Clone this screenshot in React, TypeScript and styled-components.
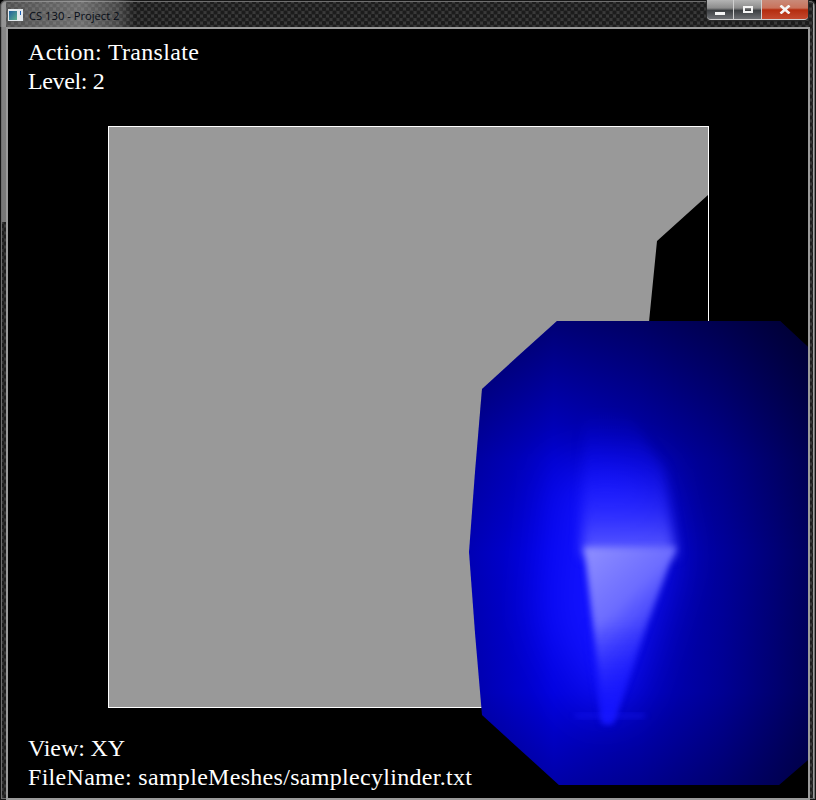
import styled, { createGlobalStyle } from "styled-components";

const GlobalStyle = createGlobalStyle`
  html, body {
    margin: 0;
    padding: 0;
    background: #000;
  }
`;

const WindowFrame = styled.div`
  width: 816px;
  height: 800px;
  box-sizing: border-box;
  display: flex;
  flex-direction: column;
  padding: 0 8px 2px 8px;
  overflow: hidden;
  border-radius: 6px 6px 0 0;
  background-color: #3a3a3a;
  background-image:
    linear-gradient(#a8a8a8, #9a9a9a),
    linear-gradient(#8a8a8a, #777),
    linear-gradient(#a0a0a0, #a0a0a0),
    radial-gradient(circle at 2px 2px, #1c1c1c 2px, transparent 2.6px),
    radial-gradient(circle at 2px 2px, #1c1c1c 2px, transparent 2.6px);
  background-size: 2px 800px, 5px 222px, 816px 2px, 7px 7px, 7px 7px;
  background-position: 813px 0, 1px 0, 0 798px, 0 0, 3.5px 3.5px;
  background-repeat: no-repeat, no-repeat, no-repeat, repeat, repeat;
  box-shadow: inset 0 0 0 1px #161616, inset 0 0 0 2px #6e6e6e;
`;

const TitleBar = styled.div`
  height: 27px;
  flex: none;
  display: flex;
  align-items: flex-start;
  justify-content: space-between;
  margin: 0 -8px 2px;
  padding: 0 8px;
  background-image: linear-gradient(90deg, rgba(170, 170, 170, 0.35), rgba(190, 190, 190, 0.5) 80px, rgba(170, 170, 170, 0.3) 118px, transparent 135px);
`;

const TitleGroup = styled.div`
  display: flex;
  align-items: center;
  gap: 6px;
  height: 30px;
`;

const AppIcon = styled.svg`
  flex: none;
`;

const TitleText = styled.span`
  font-family: "Open Sans", "Noto Sans", sans-serif;
  font-size: 11.2px;
  color: #060c16;
`;

const ButtonGroup = styled.div`
  display: flex;
  gap: 1px;
  background: #d0d0d0;
  padding-bottom: 1px;
  border-radius: 0 0 4px 4px;
  box-shadow: 0 0 0 1px #2a2a2a;
`;

const CaptionButton = styled.div<{ $width: number; $danger?: boolean }>`
  width: ${(p) => p.$width}px;
  height: 19px;
  display: flex;
  align-items: center;
  justify-content: center;
  background: ${(p) =>
    p.$danger
      ? "linear-gradient(#c98a78, #c9735c 42%, #b42c0e 52%, #c4492e)"
      : "linear-gradient(#b4b4b4, #8c8c8c 42%, #3c3f42 55%, #6e7074)"};
  &:first-child {
    border-bottom-left-radius: 3px;
  }
  &:last-child {
    border-bottom-right-radius: 3px;
  }
`;

const MinimizeGlyph = styled.div`
  width: 10px;
  height: 3px;
  margin-top: 7px;
  background: #f4f4f4;
`;

const MaximizeGlyph = styled.div`
  width: 10px;
  height: 7px;
  box-sizing: border-box;
  border: 2px solid #f4f4f4;
`;

const Viewport = styled.div`
  position: relative;
  flex: 1;
  display: flex;
  flex-direction: column;
  justify-content: space-between;
  padding: 9px 20px 6px;
  background: #000;
  box-shadow: 0 0 0 2px #9a9a9a;
`;

const Scene = styled.svg`
  position: absolute;
  left: -8px;
  top: -29px;
`;

const LabelGroup = styled.div`
  position: relative;
  font-family: "Liberation Serif", "Times New Roman", serif;
  font-size: 24px;
  line-height: 29px;
  color: #fff;
`;

const Label = styled.div<{ $tracking: number }>`
  white-space: nowrap;
  letter-spacing: ${(p) => p.$tracking}px;
`;

export default function App() {
  return (
    <>
      <GlobalStyle />
      <WindowFrame>
        <TitleBar>
          <TitleGroup>
            <AppIcon width={15} height={12} viewBox="0 0 15 12">
              <defs>
                <linearGradient id="appIconFill" x1="0" y1="0" x2="1" y2="1">
                  <stop offset="0" stopColor="#1f5f9f" />
                  <stop offset="1" stopColor="#5fb08a" />
                </linearGradient>
              </defs>
              <rect width={15} height={12} fill="#e4eaee" />
              <rect x={1} y={2} width={8} height={9} fill="url(#appIconFill)" />
              <rect x={12} y={2} width={1} height={4} fill="#1d63b8" />
            </AppIcon>
            <TitleText>CS 130 - Project 2</TitleText>
          </TitleGroup>
          <ButtonGroup>
            <CaptionButton $width={26}>
              <MinimizeGlyph />
            </CaptionButton>
            <CaptionButton $width={27}>
              <MaximizeGlyph />
            </CaptionButton>
            <CaptionButton $width={46} $danger>
              <svg width={12} height={9} viewBox="0 0 12 9">
                <path d="M1.5 0.5 L10.5 8.5 M10.5 0.5 L1.5 8.5" stroke="#f4f4f4" strokeWidth={2.6} fill="none" />
              </svg>
            </CaptionButton>
          </ButtonGroup>
        </TitleBar>
        <Viewport>
          <Scene width={816} height={800} viewBox="0 0 816 800">
            <defs>
              <clipPath id="canvasClip">
                <rect x={8} y={29} width={800} height={769} />
              </clipPath>
              <clipPath id="meshClip">
                <polygon points="557,321 780,321 808,347 808,760 779,785 559,785 482,715 475,633 469,552 475,472 482,389 517,357" />
              </clipPath>
              <linearGradient id="shadeX" x1="469" x2="808" y1="0" y2="0" gradientUnits="userSpaceOnUse">
                <stop offset="0" stopColor="#0000b4" />
                <stop offset="0.25" stopColor="#0000e8" />
                <stop offset="0.5" stopColor="#0000c8" />
                <stop offset="0.75" stopColor="#00009a" />
                <stop offset="1" stopColor="#000060" />
              </linearGradient>
              <linearGradient id="shadeY" x1="0" x2="0" y1="321" y2="785" gradientUnits="userSpaceOnUse">
                <stop offset="0" stopColor="#000" stopOpacity="0.5" />
                <stop offset="0.3" stopColor="#000" stopOpacity="0.12" />
                <stop offset="0.5" stopColor="#000" stopOpacity="0" />
                <stop offset="0.8" stopColor="#000" stopOpacity="0.05" />
                <stop offset="1" stopColor="#000" stopOpacity="0.28" />
              </linearGradient>
              <linearGradient id="glowUp" x1="0" x2="0" y1="556" y2="410" gradientUnits="userSpaceOnUse">
                <stop offset="0" stopColor="#6464ff" stopOpacity="0.95" />
                <stop offset="0.3" stopColor="#3434ff" stopOpacity="0.75" />
                <stop offset="0.65" stopColor="#1414ff" stopOpacity="0.35" />
                <stop offset="1" stopColor="#0808ff" stopOpacity="0" />
              </linearGradient>
              <linearGradient id="kite" x1="586" y1="555" x2="668" y2="640" gradientUnits="userSpaceOnUse">
                <stop offset="0" stopColor="#8c8cff" />
                <stop offset="0.5" stopColor="#6c6cff" />
                <stop offset="1" stopColor="#3030ff" stopOpacity="0.75" />
              </linearGradient>
              <linearGradient id="kiteFade" x1="0" x2="0" y1="620" y2="722" gradientUnits="userSpaceOnUse">
                <stop offset="0" stopColor="#1212ff" stopOpacity="0" />
                <stop offset="1" stopColor="#1212ff" stopOpacity="0.95" />
              </linearGradient>
              <filter id="soft" x="-40%" y="-40%" width="180%" height="180%" colorInterpolationFilters="sRGB">
                <feGaussianBlur stdDeviation="3" />
              </filter>
              <filter id="mid" x="-40%" y="-40%" width="180%" height="180%" colorInterpolationFilters="sRGB">
                <feGaussianBlur stdDeviation="6" />
              </filter>
              <filter id="wide" x="-80%" y="-80%" width="260%" height="260%" colorInterpolationFilters="sRGB">
                <feGaussianBlur stdDeviation="24" />
              </filter>
            </defs>
            <g clipPath="url(#canvasClip)">
              <rect x={108.5} y={126.5} width={600} height={581} fill="none" stroke="#fff" />
              <polygon points="109,127 708,127 708,195 657,241 649,322 649,707 109,707" fill="#999" />
              <g clipPath="url(#meshClip)">
                <rect x={460} y={315} width={356} height={480} fill="url(#shadeX)" />
                <rect x={460} y={315} width={356} height={480} fill="url(#shadeY)" />
                <polygon points="560,470 650,470 670,560 625,700 590,710 545,620" fill="#1212ff" filter="url(#wide)" />
                <polygon points="582,556 676,556 664,470 625,410 584,410" fill="url(#glowUp)" filter="url(#mid)" />
                <polygon points="584,547 676,547 611,722 604,722" fill="url(#kite)" filter="url(#soft)" />
                <polygon points="584,620 650,620 613,724 602,724" fill="url(#kiteFade)" filter="url(#soft)" />
                <rect x={575} y={714} width={70} height={4} fill="#1c1cff" opacity="0.5" filter="url(#soft)" />
              </g>
            </g>
          </Scene>
          <LabelGroup>
            <Label $tracking={0.3}>Action: Translate</Label>
            <Label $tracking={-0.37}>Level: 2</Label>
          </LabelGroup>
          <LabelGroup>
            <Label $tracking={-0.1}>View: XY</Label>
            <Label $tracking={0.3}>FileName: sampleMeshes/samplecylinder.txt</Label>
          </LabelGroup>
        </Viewport>
      </WindowFrame>
    </>
  );
}
